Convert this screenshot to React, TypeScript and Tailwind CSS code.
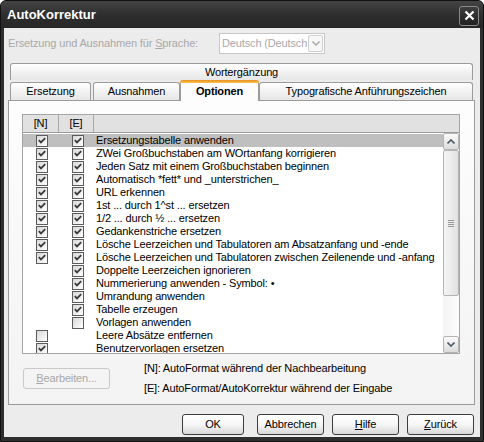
import { ReactNode } from 'react'

type Row = { label: string; n: boolean | null; e: boolean | null }

const ROWS: Row[] = [
  { label: 'Ersetzungstabelle anwenden', n: true, e: true },
  { label: 'ZWei Großbuchstaben am WOrtanfang korrigieren', n: true, e: true },
  { label: 'Jeden Satz mit einem Großbuchstaben beginnen', n: true, e: true },
  { label: 'Automatisch *fett* und _unterstrichen_', n: true, e: true },
  { label: 'URL erkennen', n: true, e: true },
  { label: '1st ... durch 1^st ... ersetzen', n: true, e: true },
  { label: '1/2 ... durch ½ ... ersetzen', n: true, e: true },
  { label: 'Gedankenstriche ersetzen', n: true, e: true },
  { label: 'Lösche Leerzeichen und Tabulatoren am Absatzanfang und -ende', n: true, e: true },
  { label: 'Lösche Leerzeichen und Tabulatoren zwischen Zeilenende und -anfang', n: true, e: true },
  { label: 'Doppelte Leerzeichen ignorieren', n: null, e: true },
  { label: 'Nummerierung anwenden - Symbol: •', n: null, e: true },
  { label: 'Umrandung anwenden', n: null, e: true },
  { label: 'Tabelle erzeugen', n: null, e: true },
  { label: 'Vorlagen anwenden', n: null, e: false },
  { label: 'Leere Absätze entfernen', n: false, e: null },
  { label: 'Benutzervorlagen ersetzen', n: true, e: null },
]

function Check({ checked }: { checked: boolean }) {
  return (
    <span className="flex h-[12px] w-[12px] items-center justify-center border border-[#5c5c5c] bg-gradient-to-br from-[#d8d8d8] to-white">
      {checked && (
        <svg width="8" height="7" viewBox="0 0 8 7">
          <path d="M0.8 3.2 L3 5.4 L7.2 1.2" stroke="#3a3a3a" strokeWidth="1.8" fill="none" />
        </svg>
      )}
    </span>
  )
}

function Chevron({ up, color = '#4e5866' }: { up?: boolean; color?: string }) {
  return (
    <svg width="8" height="5" viewBox="0 0 8 5">
      <path d={up ? 'M0.5 4.5 L4 1 L7.5 4.5' : 'M0.5 0.5 L4 4 L7.5 0.5'} stroke={color} strokeWidth="1.6" fill="none" />
    </svg>
  )
}

function Tab({ children, w, active }: { children: ReactNode; w: string; active?: boolean }) {
  if (active) {
    return (
      <div className={`${w} relative z-10 -mb-px flex h-[21px] items-center justify-center rounded-t-[3px] border-x border-[#9b9b9b] bg-[#fcfcfc] font-bold`}>
        <span className="absolute inset-x-[-1px] top-0 h-[3px] rounded-t-[3px] bg-gradient-to-b from-[#e68b2c] to-[#ffc73c]" />
        <span className="pt-[2px]">{children}</span>
      </div>
    )
  }
  return (
    <div className={`${w} flex h-[18px] items-center justify-center rounded-t-[3px] border border-b-0 border-[#9b9b9b] bg-gradient-to-b from-white to-[#e6e6e6]`}>
      {children}
    </div>
  )
}

function Button({ children, w, disabled }: { children: ReactNode; w: string; disabled?: boolean }) {
  return (
    <div
      className={`${w} flex h-[21px] items-center justify-center rounded-[3px] border ${
        disabled
          ? 'border-[#c9c9c9] bg-[#f4f4f4] text-[#a8a8a8]'
          : 'border-[#3d3d3d] bg-gradient-to-b from-white via-[#f6f6f6] to-[#d8d8d8] text-black'
      }`}
    >
      {children}
    </div>
  )
}

function ScrollBar() {
  return (
    <div className="flex w-[16px] flex-col bg-gradient-to-r from-[#f3f3f3] to-[#fdfdfd]">
      <div className="flex h-[17px] items-center justify-center rounded-[2px] border border-[#b4b4b4] bg-gradient-to-b from-[#fafafa] to-[#dcdcdc]">
        <Chevron up />
      </div>
      <div className="flex h-[146px] items-center justify-center rounded-[2px] border border-[#b4b4b4] bg-gradient-to-r from-[#f5f5f5] via-[#ececec] to-[#e0e0e0]">
        <div className="flex flex-col gap-[1px]">
          <span className="h-px w-[6px] bg-[#9a9a9a]" />
          <span className="h-px w-[6px] bg-[#9a9a9a]" />
          <span className="h-px w-[6px] bg-[#9a9a9a]" />
          <span className="h-px w-[6px] bg-[#9a9a9a]" />
        </div>
      </div>
      <div className="flex-1" />
      <div className="flex h-[17px] items-center justify-center rounded-[2px] border border-[#b4b4b4] bg-gradient-to-b from-[#fafafa] to-[#dcdcdc]">
        <Chevron />
      </div>
    </div>
  )
}

export default function App() {
  return (
    <div className="flex h-[442px] w-[484px] flex-col overflow-hidden rounded-t-[6px] border border-[#111] bg-[#2e2e2e] font-['Liberation_Sans',Arial,sans-serif] text-[11px] leading-none tracking-[-0.14px] text-black">
      {/* title bar */}
      <div className="flex h-[27px] shrink-0 items-center justify-between bg-gradient-to-b from-[#444] via-[#2f2f2f] to-[#262626] pl-[6px] pr-[4px]">
        <span className="text-[13px] font-bold tracking-normal text-white">AutoKorrektur</span>
        <div className="mt-[2px] flex h-[20px] w-[20px] items-center justify-center rounded-[3px] border border-[#8a8a8a] bg-gradient-to-b from-[#3e3e3e] to-[#222]">
          <svg width="11" height="11" viewBox="0 0 11 11">
            <path d="M1.5 1.5 L9.5 9.5 M9.5 1.5 L1.5 9.5" stroke="white" strokeWidth="2.2" />
          </svg>
        </div>
      </div>

      {/* client area */}
      <div className="mx-[3px] mb-[4px] flex flex-1 flex-col bg-[#ececec]">
        <div className="mt-[5px] flex h-[21px] items-center pl-[4px]">
          <span className="w-[211px] text-[#a9a9a9]">
            Ersetzung und Ausnahmen für <span className="underline">S</span>prache:
          </span>
          <div className="flex h-[21px] w-[106px] items-center border border-[#c7c7c7] bg-white pl-[2px] pr-px">
            <span className="flex-1 whitespace-nowrap text-[#a9a9a9]">Deutsch (Deutsch</span>
            <div className="flex h-[17px] w-[15px] shrink-0 items-center justify-center rounded-[2px] border border-[#cfcfcf] bg-[#f7f7f7]">
              <Chevron color="#b0b0b0" />
            </div>
          </div>
        </div>

        {/* tabs */}
        <div className="ml-[6px] mt-[9px] flex w-[463px] flex-col">
          <div className="flex h-[17px] items-center justify-center rounded-t-[3px] border border-b-0 border-[#9b9b9b] bg-gradient-to-b from-white to-[#e6e6e6]">
            Wortergänzung
          </div>
          <div className="flex items-end">
            <Tab w="w-[81px]">Ersetzung</Tab>
            <div className="w-[2px]" />
            <Tab w="w-[87px]">Ausnahmen</Tab>
            <Tab w="w-[79px]" active>
              Optionen
            </Tab>
            <Tab w="w-[214px]">Typografische Anführungszeichen</Tab>
          </div>
        </div>

        {/* panel */}
        <div className="ml-[4px] flex h-[305px] w-[467px] flex-col border border-[#9b9b9b] bg-gradient-to-b from-[#fdfdfd] to-[#f3f3f3] pl-[13px] pt-[13px]">
          <div className="flex h-[240px] w-[438px] flex-col border border-[#a5a5a5] bg-white">
            <div className="flex h-[18px] shrink-0 border-b border-[#9a9a9a] bg-[#e1e1e1]">
              <div className="flex w-[36px] items-center justify-center border-r border-[#a8a8a8]">[N]</div>
              <div className="flex w-[35px] items-center justify-center border-r border-[#a8a8a8]">[E]</div>
              <div className="flex-1" />
            </div>
            <div className="flex flex-1 overflow-hidden">
              <div className="flex flex-1 flex-col overflow-hidden pt-px">
                {ROWS.map((r, i) => (
                  <div key={i} className={`flex h-[13px] shrink-0 items-center ${i === 0 ? 'bg-[#bfbfbf]' : ''}`}>
                    <div className="w-[36px] pl-[13px]">{r.n !== null && <Check checked={r.n} />}</div>
                    <div className="w-[35px] pl-[13px]">{r.e !== null && <Check checked={r.e} />}</div>
                    <span className="whitespace-nowrap pl-[2px]">{r.label}</span>
                  </div>
                ))}
              </div>
              <ScrollBar />
            </div>
          </div>

          <div className="flex">
            <div className="ml-px mt-[14px]">
              <Button w="w-[87px]" disabled>
                <span>
                  <span className="underline">B</span>earbeiten...
                </span>
              </Button>
            </div>
            <div className="ml-[34px] mt-[4px] flex flex-col">
              <span className="flex h-[20px] items-center">[N]: AutoFormat während der Nachbearbeitung</span>
              <span className="flex h-[20px] items-center">[E]: AutoFormat/AutoKorrektur während der Eingabe</span>
            </div>
          </div>
        </div>

        {/* dialog buttons */}
        <div className="mr-[6px] mt-[9px] flex justify-end gap-[8px]">
          <Button w="w-[62px] mr-[5px]">OK</Button>
          <Button w="w-[67px]">Abbrechen</Button>
          <Button w="w-[67px]">
            <span>
              <span className="underline">H</span>ilfe
            </span>
          </Button>
          <Button w="w-[67px]">
            <span>
              <span className="underline">Z</span>urück
            </span>
          </Button>
        </div>
      </div>
    </div>
  )
}
